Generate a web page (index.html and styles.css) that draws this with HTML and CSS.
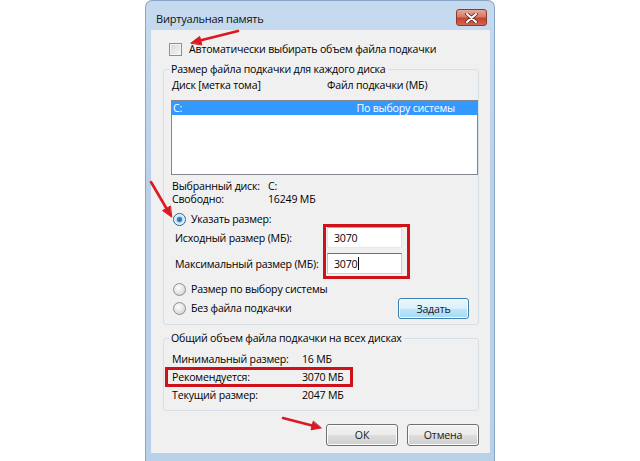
FILE: index.html
```html
<!DOCTYPE html>
<html lang="ru">
<head>
    <meta charset="UTF-8">
    <meta name="viewport" content="width=device-width, initial-scale=1.0">
    <title>Виртуальная память</title>
    <link rel="stylesheet" href="styles.css">
</head>
<body>
    <div class="window">
        <div class="titlebar">
            <span class="title">Виртуальная память</span>
            <span class="close-btn">
                <svg width="13" height="10" viewBox="0 0 13 10">
                    <path d="M2 1 L11 9 M11 1 L2 9" stroke="#5a2a22" stroke-width="3.6" stroke-linecap="round"/>
                    <path d="M2 1 L11 9 M11 1 L2 9" stroke="#ffffff" stroke-width="2" stroke-linecap="round"/>
                </svg>
            </span>
        </div>

        <div class="client">
            <div class="check-row">
                <span class="checkbox"></span>
                <span>Автоматически выбирать объем файла подкачки</span>
            </div>

            <fieldset class="group group-disks">
                <legend>Размер файла подкачки для каждого диска</legend>
                <div class="list-head">
                    <span class="col-disk">Диск [метка тома]</span>
                    <span class="col-size">Файл подкачки (МБ)</span>
                </div>
                <div class="listbox">
                    <div class="list-row selected">
                        <span class="col-disk">C:</span>
                        <span class="col-size">По выбору системы</span>
                    </div>
                </div>

                <div class="info-lines">
                    <span>Выбранный диск:</span><span>C:</span>
                    <span>Свободно:</span><span>16249 МБ</span>
                </div>

                <div class="radio-row">
                    <span class="radio checked"></span>
                    <span>Указать размер:</span>
                </div>
                <div class="size-grid">
                    <span>Исходный размер (МБ):</span>
                    <div class="textbox"><span>3070</span></div>
                    <span>Максимальный размер (МБ):</span>
                    <div class="textbox focused"><span>3070</span><span class="caret"></span></div>
                </div>
                <div class="radio-row radio-system">
                    <span class="radio"></span>
                    <span>Размер по выбору системы</span>
                </div>
                <div class="set-row">
                    <div class="radio-row">
                        <span class="radio"></span>
                        <span>Без файла подкачки</span>
                    </div>
                    <button class="btn btn-default">Задать</button>
                </div>
            </fieldset>

            <fieldset class="group group-total">
                <legend>Общий объем файла подкачки на всех дисках</legend>
                <div class="total-lines">
                    <span>Минимальный размер:</span><span>16 МБ</span>
                    <span>Рекомендуется:</span><span>3070 МБ</span>
                    <span>Текущий размер:</span><span>2047 МБ</span>
                </div>
            </fieldset>

            <div class="dialog-buttons">
                <button class="btn">ОК</button>
                <button class="btn">Отмена</button>
            </div>
        </div>
    </div>

    <!-- red marks drawn over the screenshot -->
    <svg class="marks" width="640" height="461" viewBox="0 0 640 461">
        <g fill="#dc1820" stroke="#dc1820" stroke-linecap="round">
            <line x1="238" y1="31" x2="200" y2="40.6" stroke-width="2.6"/>
            <polygon points="191,43 199.7,36.4 201.8,44.6" stroke-width="1"/>

            <line x1="151" y1="182" x2="166.5" y2="208.5" stroke-width="2.6"/>
            <polygon points="171.5,217 162.6,210.6 170.2,206.2" stroke-width="1"/>

            <line x1="283" y1="418" x2="312" y2="425.6" stroke-width="2.6"/>
            <polygon points="321,428 311,429.8 313.2,421.4" stroke-width="1"/>
        </g>
        <g fill="none" stroke="#cf1119" stroke-width="3">
            <rect x="324.5" y="225.5" width="84" height="52"/>
            <rect x="166.5" y="368.5" width="185" height="17"/>
        </g>
    </svg>
</body>
</html>
```

FILE: styles.css
```css
body {
    margin: 0;
    background-color: #ffffff;
    font-family: "Open Sans", "Noto Sans", sans-serif;
    font-size: 10.6px;
    letter-spacing: -0.2px;
    color: #000000;
}
.window {
    width: 350px;
    height: 461px;
    margin-left: 145px;
    box-sizing: border-box;
    padding: 0 4px 0 5px;
    background: linear-gradient(#c6daef, #bad1ea 40%, #b9d0e9);
    border: 1px solid #8aa6c6;
    border-bottom: none;
    border-radius: 7px 7px 0 0;
}
.titlebar {
    height: 29px;
    display: flex;
    justify-content: space-between;
    align-items: flex-start;
}
.title {
    padding: 10px 0 0 5px;
    font-size: 11px;
    line-height: 15px;
    color: #111;
}
.close-btn {
    width: 29px;
    height: 15px;
    margin: 8px 3px 0 0;
    border: 1px solid #8a3a2e;
    border-radius: 3px;
    background: linear-gradient(#e6a797, #d77a66 45%, #c3452f 55%, #d4644a);
    display: flex;
    align-items: center;
    justify-content: center;
}
.client {
    height: 423px;
    box-sizing: border-box;
    padding: 12px 11px 0 12px;
    background-color: #f0f0f0;
}
.check-row,
.radio-row {
    display: flex;
    align-items: center;
    line-height: 15px;
}
.check-row {
    margin-left: 6px;
}
.checkbox {
    width: 11px;
    height: 11px;
    margin-right: 7px;
    border: 1px solid #8f8f8f;
    background: linear-gradient(135deg, #d2d5da, #f7f7f7);
    box-shadow: inset 0 0 0 1px #f4f4f4;
}

/* group boxes */
.group {
    margin: 5px 0 0;
    padding: 1px 0 0 7px;
    border: 1px solid #d5dfe5;
    border-radius: 3px;
    min-width: 0;
}
.group legend {
    margin-left: -2px;
    padding: 0 2px;
    line-height: 15px;
}
.group-disks {
    padding-bottom: 5px;
}
.list-head,
.list-row {
    display: flex;
}
.list-head {
    line-height: 15px;
    padding-left: 1px;
}
.list-head .col-disk {
    width: 155px;
}
.listbox {
    width: 305px;
    height: 73px;
    margin-top: 7px;
    border: 1px solid #828790;
    background-color: #ffffff;
}
.list-row {
    height: 14px;
    line-height: 14px;
}
.list-row.selected {
    background-color: #3399ff;
    color: #ffffff;
}
.list-row .col-disk {
    width: 154px;
    padding-left: 1px;
}
.list-row .col-size {
    width: 128px;
    text-align: right;
}
.info-lines {
    display: grid;
    grid-template-columns: 96px auto;
    margin-top: 5px;
    padding-left: 1px;
    line-height: 13px;
}
.info-lines + .radio-row {
    margin-top: 6px;
    margin-left: 2px;
}
.radio {
    width: 11px;
    height: 11px;
    margin-right: 5px;
    border: 1px solid #8e8f8f;
    border-radius: 50%;
    background: radial-gradient(circle at 40% 35%, #ffffff, #e2e2e2 55%, #c9c9c9);
}
.radio.checked {
    border-color: #2c628b;
    background: radial-gradient(circle at 50% 50%, #1f6fb6 0, #3d8fd0 2.5px, #b9d8ee 3px, #eef4fa 5px);
}
.size-grid {
    display: grid;
    grid-template-columns: 152px 75px;
    grid-auto-rows: 21px;
    row-gap: 5px;
    align-items: center;
    margin-left: 4px;
}
.textbox {
    height: 21px;
    box-sizing: border-box;
    padding-left: 6px;
    display: flex;
    align-items: center;
    border: 1px solid #abadb3;
    border-color: #abadb3 #dbdfe6 #e3e9ef #e2e3ea;
    background-color: #ffffff;
}
.textbox.focused {
    border-color: #3d7bad #b5cfe7 #b7d9ed #a4c9e3;
}
.caret {
    width: 0;
    height: 13px;
    margin-left: 1px;
    border-left: 1px solid #000;
}
.radio-system {
    margin: 8px 0 0 2px;
}
.set-row {
    display: flex;
    justify-content: space-between;
    align-items: center;
    margin: 1px 9px 0 2px;
}
.btn {
    width: 72px;
    height: 22px;
    padding: 0;
    font: inherit;
    letter-spacing: inherit;
    color: #1a1a1a;
    border: 1px solid #707070;
    border-radius: 3px;
    background: linear-gradient(#f2f2f2, #ebebeb 50%, #dddddd 51%, #cfcfcf);
    box-shadow: inset 0 0 0 1px #fcfcfc;
}
.btn-default {
    width: 71px;
    height: 21px;
    border-color: #3c7fb1;
    background: linear-gradient(#eaf6fd, #d9f0fc 50%, #bee6fd 51%, #a7d9f5);
}
.group-total {
    margin-top: 6px;
    padding-bottom: 6px;
}
.total-lines {
    display: grid;
    grid-template-columns: 130px auto;
    padding: 3px 0 0 1px;
    line-height: 18px;
}
.dialog-buttons {
    display: flex;
    justify-content: flex-end;
    gap: 9px;
    margin-top: 13px;
}
.marks {
    position: absolute;
    top: 0;
    left: 0;
    pointer-events: none;
}
```
